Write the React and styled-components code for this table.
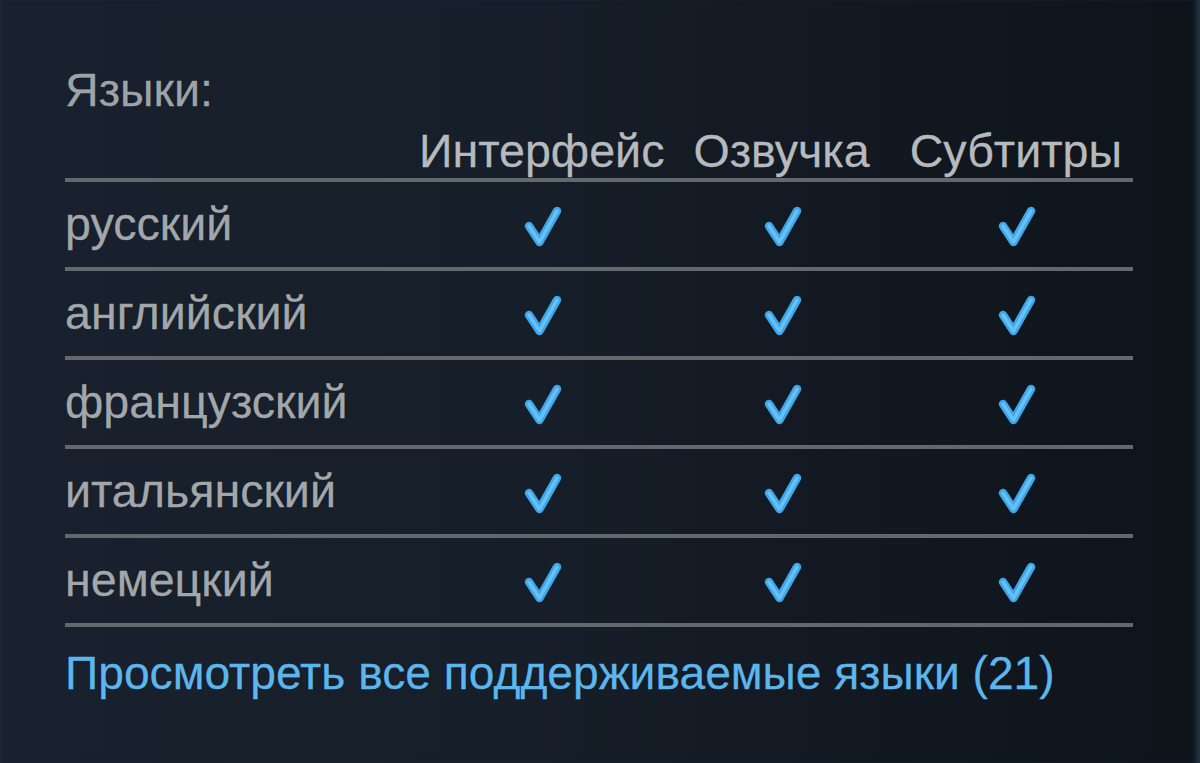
import React from "react";
import styled, { createGlobalStyle } from "styled-components";

const Global = createGlobalStyle`
  html, body { margin: 0; padding: 0; background: #131a23; }
  body { font-family: "Liberation Sans", Arial, sans-serif; }
`;

const Page = styled.div`
  width: 1200px;
  height: 763px;
  box-sizing: border-box;
  background: linear-gradient(90deg, #18212d 0%, #161e29 45%, #11171f 80%, #0f141b 100%);
  box-shadow: inset 3px 0 2px -1px #1d2836, inset -6px 0 5px -2px #24344a;
  padding: 64px 0 0 65px;
  overflow: hidden;
  text-shadow: 0 0 1px rgba(0, 0, 0, 0.6);
`;

const Title = styled.div`
  font-size: 46.6px;
  line-height: 53px;
  color: #9ea3a8;
  margin-bottom: 8px;
  -webkit-text-stroke: 0.3px currentColor;
`;

const Table = styled.div`
  width: 1068px;
  display: grid;
  grid-template-columns: 354px repeat(3, 1fr);
`;

const Row = styled.div`
  display: contents;
`;

const Cell = styled.div`
  font-size: 46.6px;
  line-height: ${(p) => (p.$head ? "53px" : "85px")};
  height: ${(p) => (p.$head ? "53px" : "85px")};
  color: ${(p) => (p.$head ? "#b6babe" : "#a2a7ab")};
  -webkit-text-stroke: 0.3px currentColor;
  border-bottom: 4px solid #63686d;
  white-space: nowrap;
  display: flex;
  align-items: center;
  justify-content: ${(p) => (p.$center ? "center" : "flex-start")};
`;

const Link = styled.a`
  display: block;
  margin-top: 20px;
  font-size: 46.2px;
  line-height: 53px;
  color: #5cb6ec;
  -webkit-text-stroke: 0.3px currentColor;
  text-decoration: none;
`;

const Check = () => (
  <svg width="42" height="46" viewBox="0 0 42 46" style={{ marginTop: 2 }}>
    <path
      d="M8 23 L18.5 39 L36 8"
      fill="none"
      stroke="#3ea6ea"
      strokeWidth="8.5"
      strokeLinecap="round"
      strokeLinejoin="round"
    />
    <path
      d="M8 23 L18.5 39 L36 8"
      fill="none"
      stroke="#67c1f5"
      strokeWidth="3.5"
      strokeLinecap="round"
      strokeLinejoin="round"
    />
  </svg>
);

const langs = ["русский", "английский", "французский", "итальянский", "немецкий"];

export default function App() {
  return (
    <>
      <Global />
      <Page>
        <Title>Языки:</Title>
        <Table>
          <Row>
            <Cell $head />
            <Cell $head $center>Интерфейс</Cell>
            <Cell $head $center>Озвучка</Cell>
            <Cell $head $center>Субтитры</Cell>
          </Row>
          {langs.map((l) => (
            <Row key={l}>
              <Cell>{l}</Cell>
              <Cell $center><Check /></Cell>
              <Cell $center><Check /></Cell>
              <Cell $center><Check /></Cell>
            </Row>
          ))}
        </Table>
        <Link href="#">Просмотреть все поддерживаемые языки (21)</Link>
      </Page>
    </>
  );
}
